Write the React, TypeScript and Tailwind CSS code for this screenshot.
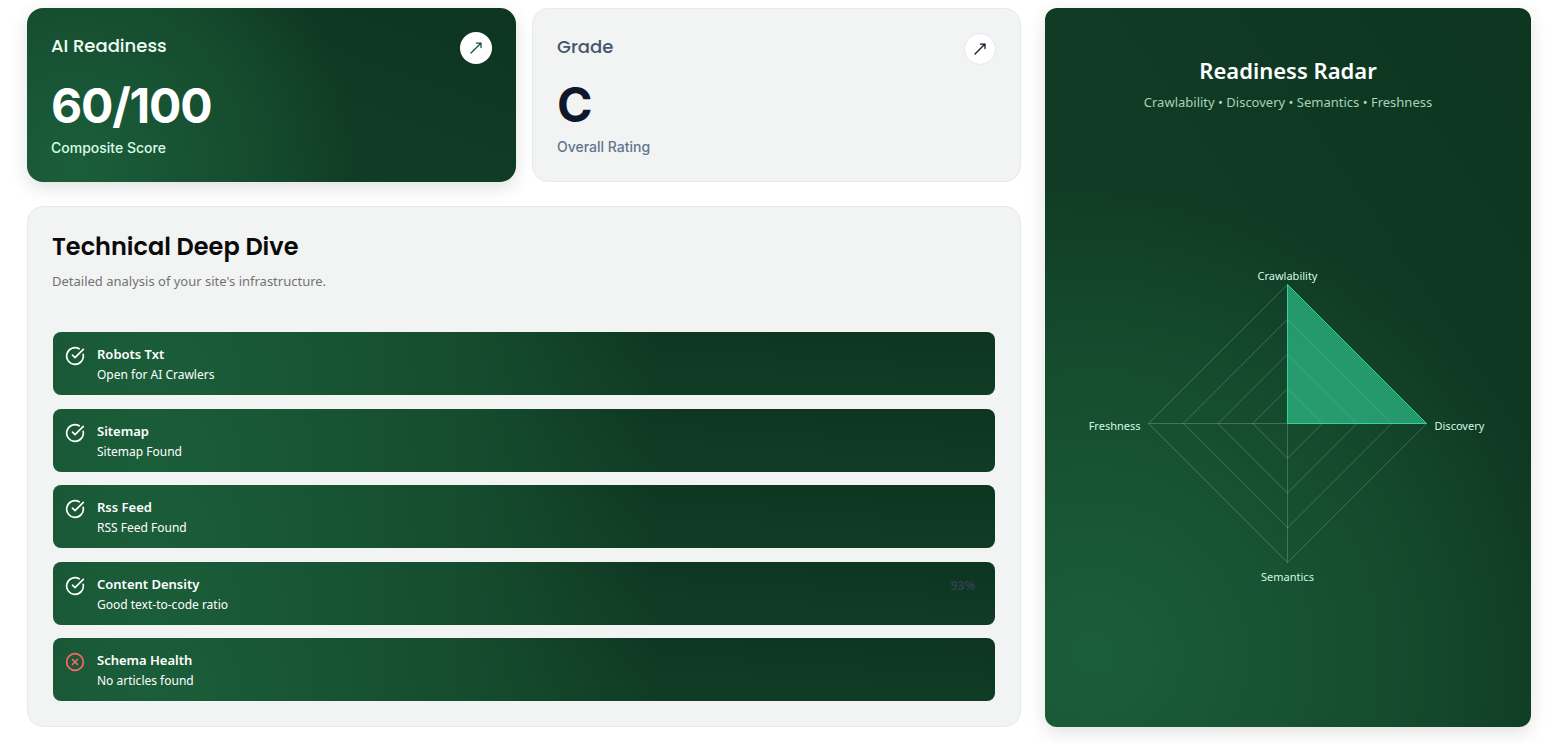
import { CircleCheckBig, CircleX } from 'lucide-react'
import clsx from 'clsx'

interface Check {
  name: string
  detail: string
  passed: boolean
  score?: number
}

const checks: Check[] = [
  { name: 'Robots Txt', detail: 'Open for AI Crawlers', passed: true },
  { name: 'Sitemap', detail: 'Sitemap Found', passed: true },
  { name: 'Rss Feed', detail: 'RSS Feed Found', passed: true },
  { name: 'Content Density', detail: 'Good text-to-code ratio', passed: true, score: 93 },
  { name: 'Schema Health', detail: 'No articles found', passed: false },
]

// clockwise from the top
const radar = [
  { subject: 'Crawlability', value: 100 },
  { subject: 'Discovery', value: 100 },
  { subject: 'Semantics', value: 0 },
  { subject: 'Freshness', value: 0 },
]

const greenSurface =
  'bg-[radial-gradient(circle_at_10%_90%,#1b5e3a_0%,#154c2e_38%,transparent_60%),linear-gradient(to_top_right,#123f28_0%,#103b24_50%,#0d3520_100%)]'
const cardShadow = 'shadow-[0_6px_18px_rgba(0,0,0,0.12)]'

function ArrowButton({ label, className }: { label: string; className: string }) {
  return (
    <button
      type="button"
      aria-label={label}
      className={clsx('flex size-8 shrink-0 items-center justify-center rounded-full bg-white', className)}
    >
      <svg
        viewBox="0 0 12 12"
        className="size-3"
        fill="none"
        stroke="currentColor"
        strokeWidth="1.25"
        strokeLinecap="round"
        strokeLinejoin="round"
      >
        <path d="M1 11 11 1M6.4 1H11v4.6" />
      </svg>
    </button>
  )
}

function CheckRow({ check }: { check: Check }) {
  const Icon = check.passed ? CircleCheckBig : CircleX

  return (
    <li className={clsx('flex items-start gap-3 rounded-lg p-3', greenSurface)}>
      <Icon className={clsx('mt-0.5 size-5 shrink-0', check.passed ? 'text-white' : 'text-red-400')} />
      <div className="flex flex-1 flex-col gap-[3px] text-white">
        <h3 className="text-[13px] leading-5 font-semibold">{check.name}</h3>
        <p className="text-xs leading-4">{check.detail}</p>
      </div>
      {check.score !== undefined && (
        <span className="px-2 text-xs leading-6 font-semibold text-slate-700">{check.score}%</span>
      )}
    </li>
  )
}

function RadarChart() {
  const cx = 219.5
  const cy = 170.5
  const radius = 139

  const point = (index: number, r: number) => {
    const angle = (index * Math.PI) / 2
    return `${cx + Math.sin(angle) * r},${cy - Math.cos(angle) * r}`
  }
  const ring = (r: number) => radar.map((_, i) => point(i, r)).join(' ')

  return (
    <svg viewBox="0 0 440 341" className="w-full max-w-[440px]" role="img" aria-label="Readiness Radar">
      <g fill="none" stroke="#ffffff" strokeOpacity="0.2">
        {[0.25, 0.5, 0.75, 1].map((step) => (
          <polygon key={step} points={ring(radius * step)} />
        ))}
        <path d={`M${cx} ${cy - radius}V${cy + radius}M${cx - radius} ${cy}H${cx + radius}`} />
      </g>
      <polygon
        points={radar.map((d, i) => point(i, (radius * d.value) / 100)).join(' ')}
        fill="#34d399"
        fillOpacity="0.6"
        stroke="#34d399"
      />
      <g fill="#d1fae5" fontSize="11">
        <text x={cx} y="27" textAnchor="middle">{radar[0].subject}</text>
        <text x={cx + radius + 8} y="177">{radar[1].subject}</text>
        <text x={cx} y="328" textAnchor="middle">{radar[2].subject}</text>
        <text x={cx - radius - 8} y="177" textAnchor="end">{radar[3].subject}</text>
      </g>
    </svg>
  )
}

export default function App() {
  return (
    <main className="grid grid-cols-[497fr_243fr] gap-6 bg-white pt-2 pr-[23px] pb-4 pl-[27px] font-['Segoe_UI','Noto_Sans',sans-serif]">
      <div className="flex flex-col gap-6">
        <div className="grid grid-cols-2 gap-4 font-['Inter',sans-serif]">
          <section
            className={clsx(
              'flex min-h-[174px] flex-col justify-between gap-4 rounded-2xl p-6 text-white',
              greenSurface,
              cardShadow,
            )}
          >
            <div className="flex items-start justify-between">
              <h2 className="font-['Poppins','Inter',sans-serif] text-lg leading-7 font-medium text-green-50">AI Readiness</h2>
              <ArrowButton label="Open AI Readiness" className="text-[#14532d]" />
            </div>
            <div>
              <p className="text-5xl leading-none font-bold tracking-tight">60/100</p>
              <p className="mt-2 text-sm leading-5 font-medium text-green-100">Composite Score</p>
            </div>
          </section>

          <section className="flex min-h-[174px] flex-col justify-between gap-4 rounded-2xl border border-[#e6eae8] bg-[#f2f4f3] p-6">
            <div className="flex items-start justify-between">
              <h2 className="font-['Poppins','Inter',sans-serif] text-lg leading-7 font-medium text-slate-600">Grade</h2>
              <ArrowButton label="Open Grade" className="border border-gray-200 text-slate-900" />
            </div>
            <div>
              <p className="text-5xl leading-none font-bold tracking-tight text-slate-900">C</p>
              <p className="mt-2 text-sm leading-5 font-medium text-slate-500">Overall Rating</p>
            </div>
          </section>
        </div>

        <section className="flex flex-1 flex-col rounded-2xl border border-[#e6eae8] bg-[#f2f4f3] p-6">
          <h2 className="font-['Poppins','Inter',sans-serif] text-2xl leading-8 font-semibold text-neutral-950">
            Technical Deep Dive
          </h2>
          <p className="mt-2 text-[13px] leading-5 text-neutral-500">Detailed analysis of your site's infrastructure.</p>
          <ul className="mt-10 flex flex-1 flex-col justify-between gap-3 p-px">
            {checks.map((check) => (
              <CheckRow key={check.name} check={check} />
            ))}
          </ul>
        </section>
      </div>

      <section className={clsx('flex min-h-[719px] flex-col rounded-xl pt-12', greenSurface, cardShadow)}>
        <header className="mb-2 text-center">
          <h2 className="text-[22px] leading-7 font-semibold text-white">Readiness Radar</h2>
          <p className="mt-2 text-[13px] leading-5 text-[#a7d3b9]">
            Crawlability • Discovery • Semantics • Freshness
          </p>
        </header>
        <div className="flex flex-1 items-center justify-center">
          <RadarChart />
        </div>
      </section>
    </main>
  )
}
